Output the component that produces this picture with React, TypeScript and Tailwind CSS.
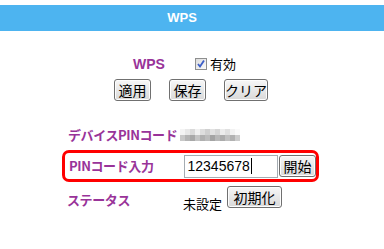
import React from 'react';

const font = "font-['MS_UI_Gothic','Noto_Sans_CJK_JP',sans-serif]";
const btn =
  "h-[22px] border border-[#707070] rounded-[3px] bg-gradient-to-b from-[#f7f7f7] to-[#d9d9d9] shadow-[inset_0_0_0_1px_#fdfdfd] text-[14px] leading-none text-black flex items-center justify-center " +
  font;
const label = 'text-[#993399] font-bold text-[13px] whitespace-nowrap tracking-[-0.4px]';

const mosaic = [
  ['#f4f4f4', '#e8e8e8', '#dadada', '#f0f0f0', '#dedede', '#d0d0d0', '#e2e2e2', '#d6d6d6', '#ececec', '#e0e0e0', '#f2f2f2', '#fafafa'],
  ['#c8c8c8', '#b4b4b4', '#a8a8a8', '#c4c4c4', '#b0b0b0', '#bcbcbc', '#a4a4a4', '#b8b8b8', '#acacac', '#c0c0c0', '#b2b2b2', '#cccccc'],
];

function Checkbox() {
  return (
    <span className="w-[12px] h-[12px] border border-[#8e8f8f] bg-gradient-to-br from-[#dcdcdc] to-[#fbfbfb] flex items-center justify-center">
      <svg width="10" height="10" viewBox="0 0 10 10">
        <path d="M2 5 L4 7.5 L8 1.5" stroke="#3c5ec8" strokeWidth="1.8" fill="none" />
      </svg>
    </span>
  );
}

export default function App() {
  return (
    <div className={`w-[384px] h-[249px] bg-white ${font}`}>
      <div className="mt-[5px] h-[26px] bg-[#4db4f0] flex items-center justify-center pr-[20px]">
        <span className="text-white font-bold text-[13px] font-['Liberation_Sans',sans-serif]">WPS</span>
      </div>

      <div className="mt-[26px] flex items-center h-[14px]">
        <span className="ml-[133px] text-[#993399] font-bold text-[14px] font-['Liberation_Sans',sans-serif]">WPS</span>
        <span className="ml-[30px]">
          <Checkbox />
        </span>
        <span className="ml-[3px] text-[13px] text-black">有効</span>
      </div>

      <div className="mt-[8px] flex">
        <button className={`${btn} ml-[114px] w-[37px]`}>適用</button>
        <button className={`${btn} ml-[18px] w-[37px]`}>保存</button>
        <button className={`${btn} ml-[18px] w-[44px]`}>クリア</button>
      </div>

      <div className="mt-[27px] flex items-center h-[14px]">
        <span className={`ml-[68px] w-[112px] ${label}`}>デバイスPINコード</span>
        <div className="flex flex-col">
          {mosaic.map((row, i) => (
            <div key={i} className="flex">
              {row.map((c, j) => (
                <div key={j} className="w-[5px] h-[6px]" style={{ background: c }} />
              ))}
            </div>
          ))}
        </div>
      </div>

      <div className="mt-[8px] ml-[62px] w-[257px] h-[32px] border-[3px] border-[#ff0000] rounded-[7px] flex items-center">
        <span className={`ml-[4px] w-[115px] ${label}`}>PINコード入力</span>
        <div className="w-[95px] h-[23px] border border-[#a5acb2] bg-white flex items-center pl-[3px] text-[14px] text-black font-['Liberation_Sans',sans-serif]">
          12345678<span className="ml-[1px] w-[1px] h-[16px] bg-black" />
        </div>
        <button className={`${btn} ml-[1px] w-[37px]`}>開始</button>
      </div>

      <div className="mt-[4px] flex items-start">
        <span className={`ml-[67px] mt-[4px] w-[116px] ${label}`}>ステータス</span>
        <span className="mt-[8px] text-[13px] text-black">未設定</span>
        <button className={`${btn} ml-[5px] w-[55px]`}>初期化</button>
      </div>
    </div>
  );
}
